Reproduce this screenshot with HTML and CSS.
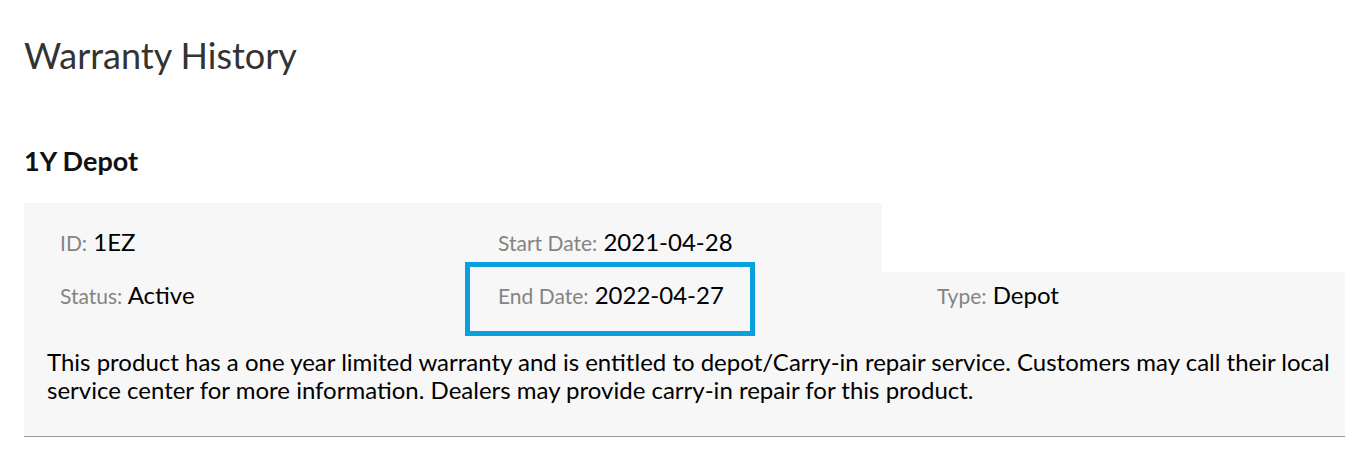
FILE: index.html
```html
<!DOCTYPE html>
<html lang="en">
<head>
    <meta charset="UTF-8">
    <meta name="viewport" content="width=device-width, initial-scale=1.0">
    <title>Warranty History</title>
    <link rel="stylesheet" href="styles.css">
</head>
<body>
    <h1 class="page-title">Warranty History</h1>

    <section class="warranty">
        <h2 class="warranty-name">1Y Depot</h2>

        <div class="warranty-card">
            <div class="row row-top">
                <div class="cell"><span class="label">ID:</span> 1EZ</div>
                <div class="cell"><span class="label">Start Date:</span> 2021-04-28</div>
            </div>
            <div class="row row-full">
                <div class="cell"><span class="label">Status:</span> Active</div>
                <div class="cell cell-marked">
                    <span class="label">End Date:</span> 2022-04-27
                    <div class="highlight"></div>
                </div>
                <div class="cell"><span class="label">Type:</span> Depot</div>
            </div>
            <p class="description">This product has a one year limited warranty and is entitled to depot/Carry-in repair service. Customers may call their local service center for more information. Dealers may provide carry-in repair for this product.</p>
        </div>
    </section>
</body>
</html>
```

FILE: styles.css
```css
body {
    margin: 0;
    padding: 0 0 0 24px;
    font-family: Lato, 'Open Sans', Arial, sans-serif;
    color: #000;
    background: #fff;
}

.page-title {
    margin: 34px 0 0;
    font-size: 36px;
    line-height: 42px;
    font-weight: 400;
    color: #333;
}

.warranty-name {
    margin: 69px 0 26px;
    font-size: 27px;
    line-height: 32px;
    font-weight: 700;
    color: #111;
}

.warranty-card {
    border-bottom: 1px solid #999;
}

.row {
    display: flex;
    background-color: #f7f7f7;
}
.row-top {
    width: 858px;
    height: 69px;
}
.row-full {
    height: 76px;
}

.cell {
    box-sizing: border-box;
    width: 438px;
    padding: 24px 0 0 36px;
    font-size: 24px;
    line-height: 30px;
}
.row-top .cell:last-child {
    width: 420px;
}
.row-full .cell {
    padding-top: 8px;
}
.row-full .cell:last-child {
    flex: 1;
    padding-left: 37px;
}

.label {
    font-size: 21px;
    color: #848484;
}

.cell-marked {
    position: relative;
}
.highlight {
    position: absolute;
    left: 3px;
    top: -10px;
    width: 290px;
    height: 74px;
    box-sizing: border-box;
    border: 5px solid #0aa0de;
}

.description {
    margin: 0;
    padding: 0 6px 32px 23px;
    background-color: #f7f7f7;
    font-size: 24px;
    line-height: 28px;
}
```
